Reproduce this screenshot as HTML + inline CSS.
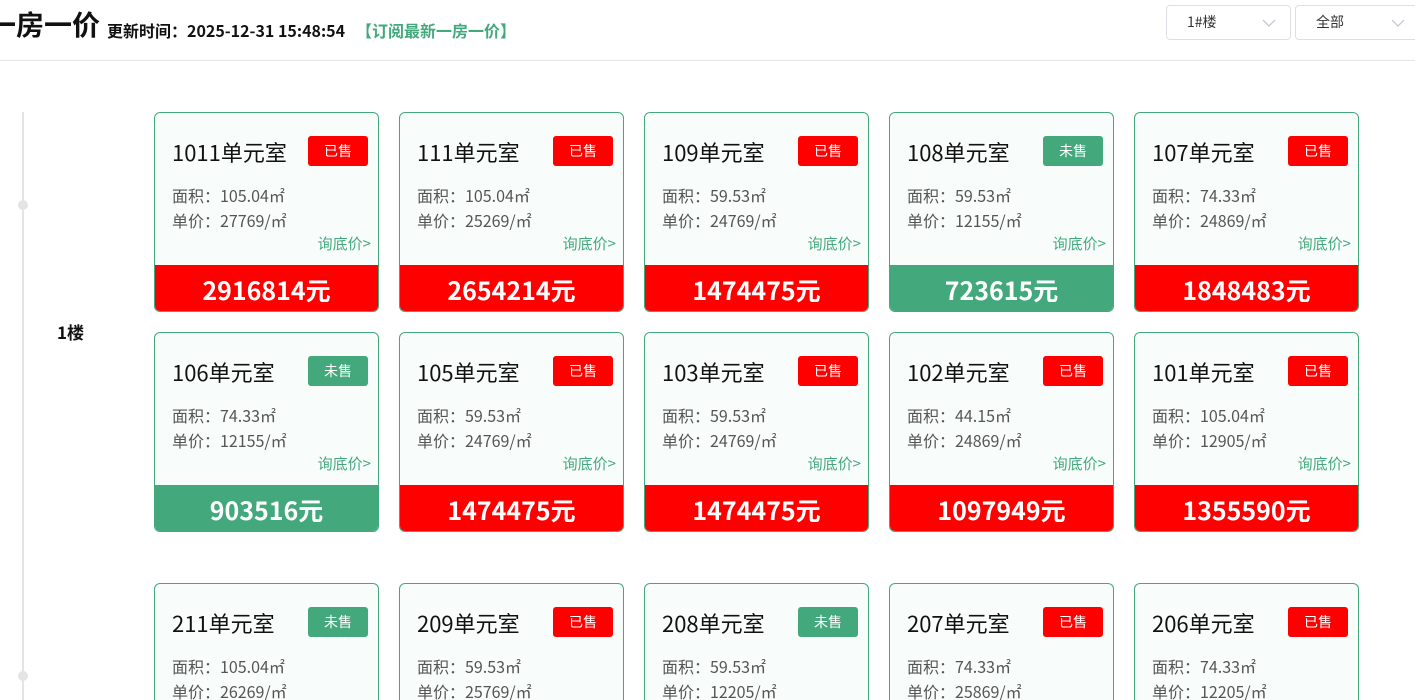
<!DOCTYPE html>
<html><head><meta charset="utf-8"><style>
*{margin:0;padding:0;box-sizing:border-box}
html,body{width:1415px;height:700px;overflow:hidden}
body{background:#fff;font-family:"Noto Sans CJK SC","Liberation Sans",sans-serif;position:relative}
.hdr{position:absolute;left:0;top:0;width:1415px;height:61px;border-bottom:1px solid #e6e6e6}
.t1{position:absolute;left:-12px;top:4px;font-size:28px;font-weight:bold;color:#111;line-height:40px}
.t2{position:absolute;left:107px;top:19px;font-size:16px;font-weight:bold;color:#111;line-height:22px}
.t3{position:absolute;left:356px;top:19px;font-size:16px;font-weight:bold;color:#43a97d;line-height:22px}
.sel{position:absolute;top:5px;height:35px;border:1px solid #dcdfe6;border-radius:4px;font-size:14px;color:#333;padding:6px 0 0 20px;line-height:20px}
.sel svg{position:absolute;right:14px;top:13px}
.line{position:absolute;left:22px;top:112px;width:2px;height:600px;background:#e4e4e4}
.dot{position:absolute;left:18px;width:10px;height:10px;border-radius:50%;background:#e4e4e4}
.fl{position:absolute;left:57px;top:320px;font-size:17px;font-weight:bold;color:#111;line-height:24px}
.card{position:absolute;width:225px;height:200px;border:1px solid #43a97d;border-radius:6px;background:#f8fdfb;overflow:hidden}
.card.cut{height:117px;border-bottom:none;border-radius:6px 6px 0 0}
.nm{position:absolute;left:17px;top:23px;font-size:22px;color:#111;line-height:32px}
.bd{position:absolute;left:153px;top:23px;width:60px;height:30px;border-radius:3px;color:#fff;font-size:14px;text-align:center;line-height:30px}
.ln{position:absolute;left:17px;font-size:16px;color:#555;line-height:22px}
.q{position:absolute;right:7px;top:120px;font-size:15px;color:#43a97d;line-height:22px}
.pr{position:absolute;left:0;bottom:0;width:100%;height:46px;color:#fff;font-size:25px;font-weight:bold;text-align:center;line-height:50px}
.r{background:#ff0000}.g{background:#43a97d}
</style></head><body>
<div class="hdr">
<div class="t1">一房一价</div>
<div class="t2">更新时间：2025-12-31 15:48:54</div>
<div class="t3">【订阅最新一房一价】</div>
<div class="sel" style="left:1166px;width:125px">1#楼<svg width="14" height="8"><path d="M1 1L7 7L13 1" fill="none" stroke="#c0c4cc" stroke-width="1.2"/></svg></div>
<div class="sel" style="left:1295px;width:120px;border-right:none;border-radius:4px 0 0 4px">全部<svg width="14" height="8" style="right:10px"><path d="M1 1L7 7L13 1" fill="none" stroke="#c0c4cc" stroke-width="1.2"/></svg></div>
</div>
<div class="line" style="height:588px"></div>
<div class="dot" style="top:200px"></div>
<div class="dot" style="top:671px"></div>
<div class="fl">1楼</div>
<div id="c"></div>
<script>
var rows=[[112,[["1011","r","105.04","27769","2916814"],["111","r","105.04","25269","2654214"],["109","r","59.53","24769","1474475"],["108","g","59.53","12155","723615"],["107","r","74.33","24869","1848483"]]],
[332,[["106","g","74.33","12155","903516"],["105","r","59.53","24769","1474475"],["103","r","59.53","24769","1474475"],["102","r","44.15","24869","1097949"],["101","r","105.04","12905","1355590"]]],
[583,[["211","g","105.04","26269",""],["209","r","59.53","25769",""],["208","g","59.53","12205",""],["207","r","74.33","25869",""],["206","r","74.33","12205",""]]]];
var h="";
rows.forEach(function(r){r[1].forEach(function(c,i){
h+='<div class="card'+(c[4]?'':' cut')+'" style="left:'+(154+i*245)+'px;top:'+r[0]+'px"><div class="nm">'+c[0]+'单元室</div><div class="bd '+c[1]+'">'+(c[1]=="r"?"已售":"未售")+'</div><div class="ln" style="top:71px">面积：'+c[2]+'㎡</div><div class="ln" style="top:96px">单价：'+c[3]+'/㎡</div>'+(c[4]?'<div class="q">询底价&gt;</div><div class="pr '+c[1]+'">'+c[4]+'元</div>':'')+'</div>';});});
document.getElementById("c").innerHTML=h;
</script>
</body></html>
